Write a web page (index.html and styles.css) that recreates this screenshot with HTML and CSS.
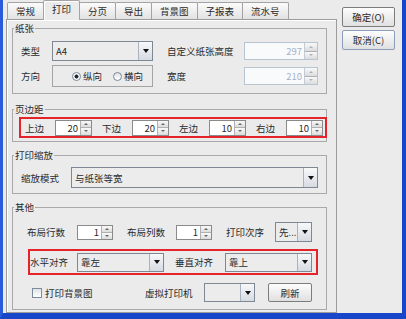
FILE: index.html
```html
<!DOCTYPE html>
<html lang="zh-CN">
<head>
  <meta charset="UTF-8">
  <title>打印设置</title>
  <link rel="stylesheet" href="styles.css">
</head>
<body>

  <div class="window">
    <div class="tabbed">
      <div class="tabs">
        <span class="tab">常规</span>
        <span class="tab active">打印</span>
        <span class="tab">分页</span>
        <span class="tab">导出</span>
        <span class="tab">背景图</span>
        <span class="tab">子报表</span>
        <span class="tab">流水号</span>
      </div>

      <div class="panel">
        <fieldset class="group paper">
          <legend>纸张</legend>
          <div class="paper-grid">
            <span>类型</span>
            <span class="combo"><span class="combo-value">A4</span><span class="combo-btn"></span></span>
            <span class="indent">自定义纸张高度</span>
            <span class="spin disabled"><span class="spin-field">297</span><span class="spin-btns"><i class="up"></i><i class="down"></i></span></span>

            <span>方向</span>
            <span class="radios">
              <span class="radio on"><i></i>纵向</span>
              <span class="radio"><i></i>横向</span>
            </span>
            <span class="indent">宽度</span>
            <span class="spin disabled"><span class="spin-field">210</span><span class="spin-btns"><i class="up"></i><i class="down"></i></span></span>
          </div>
        </fieldset>

        <fieldset class="group margin">
          <legend>页边距</legend>
          <div class="mark margins">
            <span class="pair"><span class="caption">上边</span><span class="spin"><span class="spin-field">20</span><span class="spin-btns"><i class="up"></i><i class="down"></i></span></span></span>
            <span class="pair"><span class="caption">下边</span><span class="spin"><span class="spin-field">20</span><span class="spin-btns"><i class="up"></i><i class="down"></i></span></span></span>
            <span class="pair"><span class="caption">左边</span><span class="spin"><span class="spin-field">10</span><span class="spin-btns"><i class="up"></i><i class="down"></i></span></span></span>
            <span class="pair"><span class="caption">右边</span><span class="spin"><span class="spin-field">10</span><span class="spin-btns"><i class="up"></i><i class="down"></i></span></span></span>
          </div>
        </fieldset>

        <fieldset class="group scale">
          <legend>打印缩放</legend>
          <div class="scale-row">
            <span>缩放模式</span>
            <span class="combo"><span class="combo-value">与纸张等宽</span><span class="combo-btn"></span></span>
          </div>
        </fieldset>

        <fieldset class="group other">
          <legend>其他</legend>
          <div class="layout-row">
            <span class="caption">布局行数</span>
            <span class="spin"><span class="spin-field">1</span><span class="spin-btns"><i class="up"></i><i class="down"></i></span></span>
            <span class="caption spaced">布局列数</span>
            <span class="spin"><span class="spin-field">1</span><span class="spin-btns"><i class="up"></i><i class="down"></i></span></span>
            <span class="caption spaced">打印次序</span>
            <span class="combo order"><span class="combo-value">先...</span><span class="combo-btn"></span></span>
          </div>

          <div class="mark align-row">
            <span class="caption">水平对齐</span>
            <span class="combo"><span class="combo-value">靠左</span><span class="combo-btn"></span></span>
            <span class="caption second">垂直对齐</span>
            <span class="combo"><span class="combo-value">靠上</span><span class="combo-btn"></span></span>
          </div>

          <div class="printer-row">
            <span class="check"><i></i>打印背景图</span>
            <span>虚拟打印机</span>
            <span class="combo"><span class="combo-value"></span><span class="combo-btn"></span></span>
            <span class="btn refresh">刷新</span>
          </div>
        </fieldset>
      </div>
    </div>

    <div class="actions">
      <span class="btn ok">确定(O)</span>
      <span class="btn cancel">取消(C)</span>
    </div>
  </div>

</body>
</html>
```

FILE: styles.css
```css
* {
  box-sizing: border-box;
}

body {
  margin: 0;
  font-family: "Noto Sans CJK SC", "Noto Sans", sans-serif;
  font-size: 9.5px;
  line-height: 12px;
  color: #2a2a2a;
  background: #1d4fd0;
}

.window {
  width: 406px;
  height: 319px;
  display: flex;
  background: #ebebeb;
  border-left: 3px solid #2a5bd8;
  border-right: 4px solid #1746c8;
  border-bottom: 6px solid #1746c8;
}

/* tabbed pane */

.tabbed {
  margin-left: 3px;
  width: 331px;
  display: flex;
  flex-direction: column;
}

.tabs {
  display: flex;
  align-items: flex-end;
  height: 19px;
  padding-left: 1px;
}

.tab {
  height: 17px;
  padding: 0 8px;
  margin-right: -1px;
  line-height: 16px;
  white-space: nowrap;
  border: 1px solid #a3a3a3;
  border-bottom: none;
  border-radius: 2px 2px 0 0;
  background: linear-gradient(#fbfbfb, #e2e2e2);
}

.tab.active {
  position: relative;
  z-index: 1;
  height: 20px;
  margin-bottom: -1px;
  background: #ebebeb;
  box-shadow: inset 1px 1px 0 #fff;
}

.panel {
  height: 294px;
  padding: 1px 9px 0 5px;
  border: 1px solid #9c9c9c;
  box-shadow: inset 1px 1px 0 #fff;
}

/* titled groups */

.group {
  margin: 0;
  min-width: 0;
  padding: 0 8px;
  border: 1px solid #a9a9a9;
}

.group legend {
  margin-left: -7px;
  padding: 0 1px;
  line-height: 14px;
}

.paper {
  height: 73px;
  padding-top: 6px;
}

.margin {
  height: 40px;
  margin-top: 8px;
  padding: 1px 0 0 6px;
}

.margin legend {
  margin-left: -5px;
}

.scale {
  height: 46px;
  margin-top: 6px;
  padding-top: 5px;
}

.other {
  height: 110px;
  margin-top: 6px;
  padding: 8px 0 0 8px;
}

.mark {
  border: 2px solid #e5232b;
}

/* 纸张 */

.paper-grid {
  display: grid;
  grid-template-columns: 31px 101px 91px 74px;
  grid-template-rows: 20px 22px;
  row-gap: 4px;
  align-items: center;
}

.paper-grid .combo {
  height: 20px;
}

.paper-grid .spin {
  height: 18px;
}

.indent {
  padding-left: 14px;
  white-space: nowrap;
}

.radios {
  display: flex;
  align-items: center;
  height: 22px;
  padding-left: 19px;
  gap: 11px;
  border: 1px solid #a4a4a4;
}

.radio {
  display: flex;
  align-items: center;
  gap: 2px;
}

.radio i {
  width: 9px;
  height: 9px;
  border-radius: 50%;
  border: 1px solid #7b8797;
  background: linear-gradient(#dde2e8, #fff);
}

.radio.on i {
  background: radial-gradient(circle, #1f2a36 0 1.8px, #fff 2.3px);
}

/* 页边距 */

.margins {
  display: flex;
  align-items: center;
  gap: 10px;
  width: 308px;
  height: 21px;
  padding-left: 4px;
}

.pair {
  display: flex;
  align-items: center;
}

.pair .caption {
  width: 30px;
}

.pair .spin {
  width: 37px;
  height: 16px;
}

/* 打印缩放 */

.scale-row {
  display: grid;
  grid-template-columns: 50px 247px;
  align-items: center;
}

.scale-row .combo {
  height: 21px;
}

/* 其他 */

.layout-row {
  display: flex;
  align-items: center;
  height: 20px;
  margin-left: 6px;
}

.layout-row .caption {
  width: 50px;
}

.layout-row .caption.spaced {
  width: 49px;
  margin-left: 14px;
}

.layout-row .spin {
  width: 36px;
  height: 15px;
}

.layout-row .order {
  width: 37px;
  height: 20px;
}

.align-row {
  display: flex;
  align-items: center;
  width: 290px;
  height: 26px;
  margin: 7px 0 0 7px;
}

.align-row .caption {
  width: 47px;
  white-space: nowrap;
}

.align-row .caption.second {
  width: 61px;
  padding-left: 11px;
}

.align-row .combo {
  width: 87px;
  height: 19px;
}

.printer-row {
  display: grid;
  grid-template-columns: 113px 59px 51px 57px;
  align-items: center;
  height: 19px;
  margin: 8px 0 0 11px;
}

.printer-row .combo {
  height: 19px;
}

.printer-row .refresh {
  margin-left: 13px;
  width: 44px;
  height: 19px;
}

.check {
  display: flex;
  align-items: center;
  gap: 3px;
}

.check i {
  width: 10px;
  height: 10px;
  border: 1px solid #7d8a9b;
  background: linear-gradient(#dfe3e8, #fff);
}

/* combo box */

.combo {
  display: flex;
  border: 1px solid #7e8894;
  background: #ececec;
}

.combo-value {
  flex: 1;
  display: flex;
  align-items: center;
  padding-left: 3px;
  overflow: hidden;
  white-space: nowrap;
}

.combo-btn {
  width: 14px;
  display: flex;
  align-items: center;
  justify-content: center;
  border-left: 1px solid #a9b2bd;
  background: linear-gradient(#f7f8fa, #d6dbe2);
}

.combo-btn::after {
  content: "";
  border-left: 3.5px solid transparent;
  border-right: 3.5px solid transparent;
  border-top: 4px solid #111;
}

/* spinner */

.spin {
  display: flex;
  border: 1px solid #8a8a8a;
  background: #fff;
}

.spin-field {
  flex: 1;
  display: flex;
  align-items: center;
  justify-content: flex-end;
  padding-right: 2px;
}

.spin-btns {
  width: 11px;
  display: flex;
  flex-direction: column;
  border-left: 1px solid #b0b0b0;
}

.spin-btns i {
  flex: 1;
  display: flex;
  align-items: center;
  justify-content: center;
  background: linear-gradient(#f9f9f9, #dcdcdc);
}

.spin-btns i + i {
  border-top: 1px solid #b0b0b0;
}

.spin-btns i::after {
  content: "";
  border-left: 2px solid transparent;
  border-right: 2px solid transparent;
}

.spin-btns .up::after {
  border-bottom: 2px solid #666;
}

.spin-btns .down::after {
  border-top: 2px solid #666;
}

.spin.disabled {
  border-color: #b9c4d3;
  background: #f9fafc;
  color: #a6b2c6;
}

.spin.disabled .spin-btns {
  width: 13px;
  border-left-color: #c3cbd6;
}

.spin.disabled .spin-btns i::after {
  border-bottom-color: #aab3c0;
  border-top-color: #aab3c0;
}

/* buttons */

.btn {
  display: flex;
  align-items: center;
  justify-content: center;
  border: 1px solid #7c7c7c;
  border-radius: 2px;
  background: linear-gradient(#fdfdfd, #e0e0e0);
  white-space: nowrap;
}

.actions {
  display: flex;
  flex-direction: column;
  gap: 3px;
  margin-left: 5px;
  padding-top: 7px;
}

.actions .btn {
  width: 53px;
  height: 20px;
}

.actions .cancel {
  border-color: #8c9dbb;
}
```
